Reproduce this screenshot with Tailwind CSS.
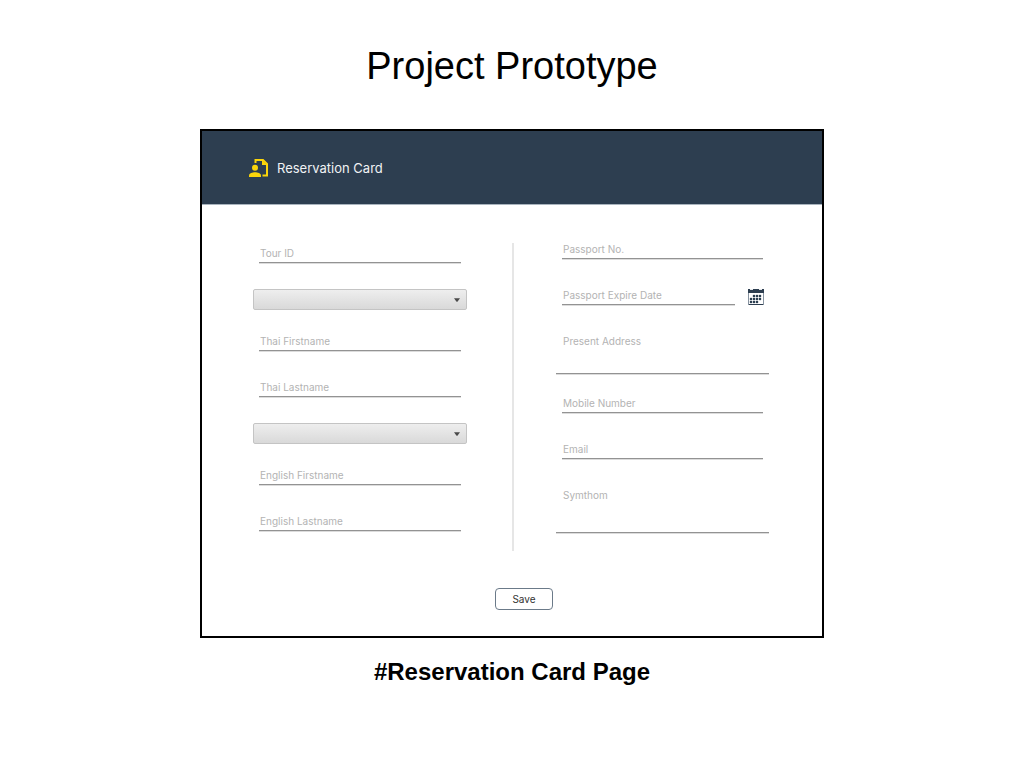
<!DOCTYPE html>
<html lang="en">
<head>
<meta charset="utf-8">
<meta name="viewport" content="width=device-width, initial-scale=1">
<title>Project Prototype</title>
<script src="https://cdn.jsdelivr.net/npm/@tailwindcss/browser@4"></script>
</head>
<body class="bg-white text-black font-['Liberation_Sans',Arial,sans-serif]">
<main class="flex flex-col items-center px-4 pt-11">
  <h1 class="text-[38px] leading-[44px]">Project Prototype</h1>

  <section class="mt-[41px] w-full max-w-[624px] border-2 border-black bg-white font-['Inter',sans-serif]">
    <header class="flex h-[74px] items-center gap-2 border-b border-[#a9b4be] bg-[#2d3e50] pl-[47px]">
      <svg class="h-5 w-5" viewBox="0 0 20 20" fill="none" aria-hidden="true">
        <path d="M6.5 5V2H14L18 6V17.5H13.5" stroke="#fbd50b" stroke-width="2"/>
        <path d="M13 2L18 7H13Z" fill="#fbd50b"/>
        <circle cx="6" cy="9.8" r="3" fill="#fbd50b"/>
        <path d="M0 19V17.5C0 15 3.5 14.2 6 14.2S12 15 12 17.5V19Z" fill="#fbd50b"/>
      </svg>
      <h2 class="pt-px text-[13px] leading-5 text-[#f0f2f4]">Reservation Card</h2>
    </header>

    <form class="pt-[34px] pb-[26px]" onsubmit="return false">
      <div class="grid grid-cols-[261fr_255fr] pr-[53px] pl-[51px]">
        <div class="mt-1 flex flex-col border-r-2 border-[#e6e6e6] pr-[45px] pb-5">
          <input type="text" aria-label="Tour ID" placeholder="Tour ID" class="mx-1.5 h-5 border-b border-[#939393] px-px text-[10px] leading-4 shadow-[0_1px_0_#dcdcdc] outline-none placeholder:text-[#b3b3b3]">
          <div class="relative mt-[26px]">
            <select aria-label="Thai title" class="block h-[21px] w-full appearance-none rounded-xs border border-[#c4c4c4] bg-linear-to-b from-[#eeeeee] to-[#d9d9d9] px-2 text-[10px]"><option></option></select>
            <svg class="pointer-events-none absolute top-[9px] right-[7px] h-1 w-[6px]" viewBox="0 0 7 4" aria-hidden="true"><path d="M0 0H7L4 4H3Z" fill="#4a4a4a"/></svg>
          </div>
          <input type="text" aria-label="Thai Firstname" placeholder="Thai Firstname" class="mx-1.5 mt-[21px] h-5 border-b border-[#939393] px-px text-[10px] leading-4 shadow-[0_1px_0_#dcdcdc] outline-none placeholder:text-[#b3b3b3]">
          <input type="text" aria-label="Thai Lastname" placeholder="Thai Lastname" class="mx-1.5 mt-[26px] h-5 border-b border-[#939393] px-px text-[10px] leading-4 shadow-[0_1px_0_#dcdcdc] outline-none placeholder:text-[#b3b3b3]">
          <div class="relative mt-[26px]">
            <select aria-label="English title" class="block h-[21px] w-full appearance-none rounded-xs border border-[#c4c4c4] bg-linear-to-b from-[#eeeeee] to-[#d9d9d9] px-2 text-[10px]"><option></option></select>
            <svg class="pointer-events-none absolute top-[9px] right-[7px] h-1 w-[6px]" viewBox="0 0 7 4" aria-hidden="true"><path d="M0 0H7L4 4H3Z" fill="#4a4a4a"/></svg>
          </div>
          <input type="text" aria-label="English Firstname" placeholder="English Firstname" class="mx-1.5 mt-[21px] h-5 border-b border-[#939393] px-px text-[10px] leading-4 shadow-[0_1px_0_#dcdcdc] outline-none placeholder:text-[#b3b3b3]">
          <input type="text" aria-label="English Lastname" placeholder="English Lastname" class="mx-1.5 mt-[26px] h-5 border-b border-[#939393] px-px text-[10px] leading-4 shadow-[0_1px_0_#dcdcdc] outline-none placeholder:text-[#b3b3b3]">
        </div>

        <div class="flex flex-col pl-[42px]">
          <input type="text" aria-label="Passport No." placeholder="Passport No." class="mx-1.5 h-5 border-b border-[#939393] px-px text-[10px] leading-4 shadow-[0_1px_0_#dcdcdc] outline-none placeholder:text-[#b3b3b3]">
          <div class="mt-[26px] flex h-5 items-end pr-[5px] pl-1.5">
            <input type="text" aria-label="Passport Expire Date" placeholder="Passport Expire Date" class="h-5 min-w-0 flex-1 border-b border-[#939393] px-px text-[10px] leading-4 shadow-[0_1px_0_#dcdcdc] outline-none placeholder:text-[#b3b3b3]">
            <button type="button" aria-label="Choose date" class="ml-[13px] h-4 w-4">
              <svg class="h-4 w-4" viewBox="0 0 16 16" aria-hidden="true">
                <path d="M0 0H16V16H0Z" fill="#2d3e50"/>
                <path d="M2 0H5V1H2ZM11 0H14V1H11Z" fill="#e6e9ec"/>
                <path d="M1 4H15V15H1Z" fill="#fff"/>
                <path d="M0 4H1V16H0ZM15 4H16V16H15Z" fill="#8793a0"/>
                <path d="M5 6H7V8H5ZM8 6H10V8H8ZM11 6H13V8H11ZM2 9H4V11H2ZM5 9H7V11H5ZM8 9H10V11H8ZM11 9H13V11H11ZM2 12H4V14H2ZM5 12H7V14H5ZM8 12H10V14H8Z" fill="#2d3e50" stroke="#2d3e50" stroke-width=".3"/>
              </svg>
            </button>
          </div>
          <textarea aria-label="Present Address" placeholder="Present Address" class="mt-[26px] h-[43px] resize-none border-b border-[#939393] px-[7px] pt-0.5 text-[10px] leading-4 shadow-[0_1px_0_#dcdcdc] outline-none placeholder:text-[#b3b3b3]"></textarea>
          <input type="text" aria-label="Mobile Number" placeholder="Mobile Number" class="mx-1.5 mt-[19px] h-5 border-b border-[#939393] px-px text-[10px] leading-4 shadow-[0_1px_0_#dcdcdc] outline-none placeholder:text-[#b3b3b3]">
          <input type="text" aria-label="Email" placeholder="Email" class="mx-1.5 mt-[26px] h-5 border-b border-[#939393] px-px text-[10px] leading-4 shadow-[0_1px_0_#dcdcdc] outline-none placeholder:text-[#b3b3b3]">
          <textarea aria-label="Symthom" placeholder="Symthom" class="mt-[26px] h-12 resize-none border-b border-[#939393] px-[7px] pt-0.5 text-[10px] leading-4 shadow-[0_1px_0_#dcdcdc] outline-none placeholder:text-[#b3b3b3]"></textarea>
        </div>
      </div>
      <div class="mt-[37px] flex justify-center pl-6">
        <button type="submit" class="h-[22px] w-[58px] rounded border border-[#6b7a89] bg-white text-[10px] leading-4 text-[#333]">Save</button>
      </div>
    </form>
  </section>

  <p class="mt-5 text-2xl leading-7 font-bold">#Reservation Card Page</p>
</main>
</body>
</html>
